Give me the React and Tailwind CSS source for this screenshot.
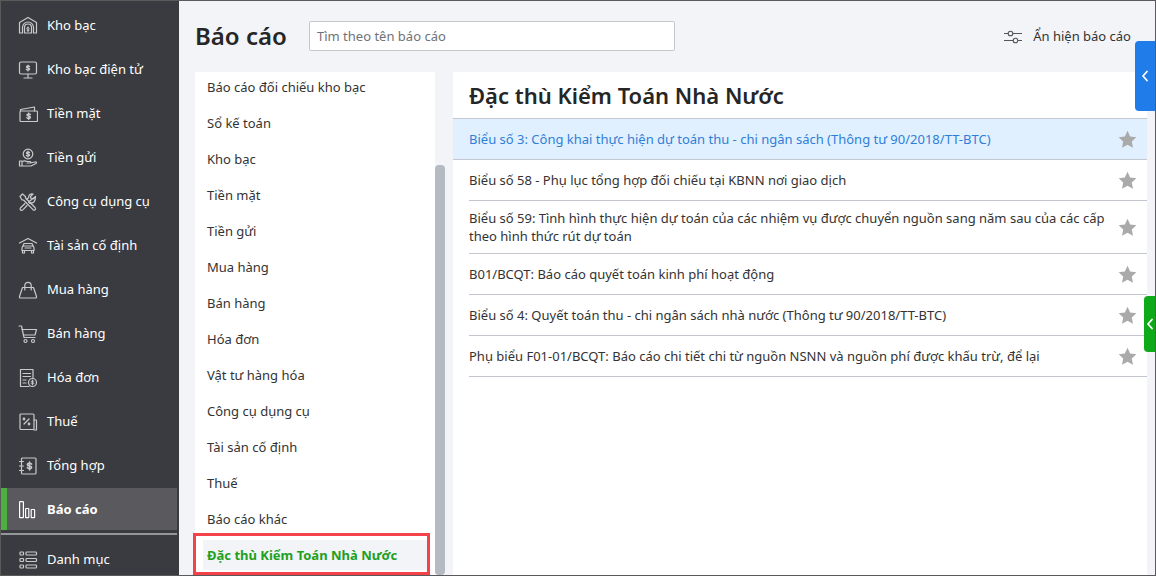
import React from "react";

// dollar sign used inside several menu icons
const Dollar = ({ x, y, s = 1 }) => (
  <g transform={`translate(${x} ${y}) scale(${s})`}>
    <path d="M1.6-1.4C1.2-2 .6-2.1 0-2.1c-.9 0-1.6.5-1.6 1.1C-1.6.6 1.6-.5 1.6 1c0 .6-.7 1.1-1.6 1.1-.7 0-1.3-.2-1.7-.8M0-3v6" />
  </g>
);

const Icon = ({ children }) => (
  <svg
    viewBox="0 0 20 20"
    className="w-5 h-5 shrink-0"
    fill="none"
    stroke="#c9cacc"
    strokeWidth="1.2"
    strokeLinecap="round"
    strokeLinejoin="round"
  >
    {children}
  </svg>
);

const menu = [
  {
    label: "Kho bạc",
    icon: (
      <>
        <path d="M1.5 17V6.5L10 1.5l8.500 5V17h-3v-5.500a5.500 5.500 0 0 0-11 0V17z" />
        <path d="M6.500 17v-5.500a3.500 3.500 0 0 1 7 0V17z" />
        <Dollar x={10} y={13.2} s={0.8} />
      </>
    ),
  },
  {
    label: "Kho bạc điện tử",
    icon: (
      <>
        <rect x="1.500" y="2" width="17" height="12" rx="1.500" />
        <path d="M10 14v3M6 18h8" />
        <Dollar x={10} y={8} />
      </>
    ),
  },
  {
    label: "Tiền mặt",
    icon: (
      <>
        <rect x="2" y="7" width="17.500" height="10.500" rx="1" />
        <path d="M2.500 7V5.500L16.500 3v4" />
        <Dollar x={10.700} y={12.200} s={1.100} />
      </>
    ),
  },
  {
    label: "Tiền gửi",
    icon: (
      <>
        <circle cx="10" cy="6" r="4.800" />
        <Dollar x={10} y={6} />
        <path d="M1.500 13h2.500v5h-2.500zM4 13.500c2-1 3.500-.8 5 0h3c1 0 1 1.500 0 1.500H9M12 15l5-1c1.500-.3 2 .9 1 1.500l-5 2.500H4" />
      </>
    ),
  },
  {
    label: "Công cụ dụng cụ",
    icon: (
      <>
        <path d="M2 4.500 4.500 2l3 2.500v1.500l9.500 9.500c1.500 2-.5 3.500-2 2.200L5.500 8H4z" />
        <path d="M17.500 4.500 15 7l-2-.5-.5-2L15 2c-2.500-.7-4.500.8-4.300 3.500L8.500 7.700M10.500 10l1.500 1.500 1-.6c2.500.4 4.500-1.500 4.500-6.400z" />
        <path d="M7 11.500 2.600 15.700c-1.500 1.800.8 3.500 2.300 2.200L9 13.500" />
      </>
    ),
  },
  {
    label: "Tài sản cố định",
    icon: (
      <>
        <path d="M1.500 7 10 2.500 18.500 7" />
        <path d="M4 14.500v-2.500c0-1 .5-1.500 1-2l1-2.500h8l1 2.500c.5.500 1 1 1 2v2.500z" />
        <path d="M5 10h10M4.500 14.500V17h2v-2.500M13.500 14.500V17h2v-2.500M7 12h6" />
      </>
    ),
  },
  {
    label: "Mua hàng",
    icon: (
      <>
        <path d="M4.500 7.500h11l3 9c.3 1-.3 1.500-1 1.500h-15c-.7 0-1.300-.5-1-1.500z" />
        <path d="M6.800 10V5.500a3.200 3.200 0 0 1 6.400 0V10" />
      </>
    ),
  },
  {
    label: "Bán hàng",
    icon: (
      <>
        <path d="M1 2h2.500l2.500 11.500h11" />
        <path d="M4 5.500h14.500l-1.500 5.500H5.500" />
        <circle cx="7.500" cy="17" r="1.500" />
        <circle cx="15" cy="17" r="1.500" />
      </>
    ),
  },
  {
    label: "Hóa đơn",
    icon: (
      <>
        <path d="M11 18.500H2.500V1.500H15v8" />
        <path d="M5 5.500h7.500M5 8.500h7.500M5 12h3M5 15h3" />
        <circle cx="14.500" cy="14.500" r="4" />
        <Dollar x={14.500} y={14.500} s={0.8} />
      </>
    ),
  },
  {
    label: "Thuế",
    icon: (
      <>
        <rect x="2" y="2" width="14" height="15.500" rx="1" />
        <path d="M16 8h2.500v10H16" />
        <path d="m6 12 5-5" />
        <circle cx="6" cy="7" r=".8" />
        <circle cx="11" cy="12" r=".8" />
      </>
    ),
  },
  {
    label: "Tổng hợp",
    icon: (
      <>
        <rect x="3.500" y="2" width="14.500" height="16" rx="1" />
        <path d="M1.500 5.500h4M1.500 10h4M1.500 14.500h4" />
        <Dollar x={11.500} y={10} s={1.300} />
      </>
    ),
  },
  {
    label: "Báo cáo",
    active: true,
    icon: (
      <g stroke="#ffffff">
        <rect x="1.600" y="1.700" width="3.800" height="16" rx=".5" />
        <rect x="7.600" y="8.500" width="3.200" height="9.200" rx=".5" />
        <rect x="13.200" y="9.500" width="3.400" height="8.200" rx=".5" />
      </g>
    ),
  },
];

const groups = [
  "Báo cáo đối chiếu kho bạc",
  "Sổ kế toán",
  "Kho bạc",
  "Tiền mặt",
  "Tiền gửi",
  "Mua hàng",
  "Bán hàng",
  "Hóa đơn",
  "Vật tư hàng hóa",
  "Công cụ dụng cụ",
  "Tài sản cố định",
  "Thuế",
  "Báo cáo khác",
];

const reports = [
  {
    title: "Biểu số 3: Công khai thực hiện dự toán thu - chi ngân sách (Thông tư 90/2018/TT-BTC)",
    active: true,
  },
  { title: "Biểu số 58 - Phụ lục tổng hợp đối chiếu tại KBNN nơi giao dịch" },
  {
    title:
      "Biểu số 59: Tình hình thực hiện dự toán của các nhiệm vụ được chuyển nguồn sang năm sau của các cấp theo hình thức rút dự toán",
  },
  { title: "B01/BCQT: Báo cáo quyết toán kinh phí hoạt động" },
  { title: "Biểu số 4: Quyết toán thu - chi ngân sách nhà nước (Thông tư 90/2018/TT-BTC)" },
  { title: "Phụ biểu F01-01/BCQT: Báo cáo chi tiết chi từ nguồn NSNN và nguồn phí được khấu trừ, để lại" },
];

const Star = () => (
  <svg viewBox="0 0 20 20" className="w-[19px] h-[19px] shrink-0" fill="#aaaaaa">
    <path d="M10 .8l2.800 6 6.500.8-4.800 4.500 1.300 6.500L10 15.400l-5.800 3.200 1.300-6.500L.7 7.600l6.500-.8z" />
  </svg>
);

const Chevron = () => (
  <svg viewBox="0 0 8 12" className="w-2 h-3" fill="none" stroke="#ffffff" strokeWidth="1.800" strokeLinecap="round" strokeLinejoin="round">
    <path d="M6 1.500 2 6l4 4.500" />
  </svg>
);

const App = () => {
  return (
    <div className="relative flex w-[1156px] h-[576px] overflow-hidden bg-[#f2f4f8] border border-[#5a5a5a] font-['Noto_Sans',sans-serif] text-[13px] text-[#333333]">
      {/* sidebar */}
      <aside className="w-[178px] shrink-0 bg-[#3a3b40] pt-[2px] text-white">
        {menu.map((item) => (
          <div key={item.label} className="h-11 py-px">
            <div
              className={`flex items-center h-[42px] mr-[2px] pt-[2px] gap-[9px] ${
                item.active ? "bg-[#59595e] font-bold border-l-[6px] border-[#4caf3f] pl-[11px]" : "pl-[17px]"
              }`}
            >
              <Icon>{item.icon}</Icon>
              <span>{item.label}</span>
            </div>
          </div>
        ))}
        <div className="h-[2px] mr-[2px] mt-[2px] bg-[#96979b]" />
        <div className="flex items-center h-[50px] pl-[17px] gap-[9px]">
          <Icon>
            <rect x="2" y="2" width="3.500" height="3" rx=".8" />
            <rect x="2" y="8.500" width="3.500" height="3" rx=".8" />
            <rect x="2" y="15" width="3.500" height="3" rx=".8" />
            <rect x="8" y="2" width="10.500" height="3" rx=".8" />
            <rect x="8" y="8.500" width="10.500" height="3" rx=".8" />
            <rect x="8" y="15" width="10.500" height="3" rx=".8" />
          </Icon>
          <span>Danh mục</span>
        </div>
      </aside>

      {/* main */}
      <main className="flex-1 min-w-0 flex flex-col">
        <header className="flex items-center h-[70px] mb-px shrink-0 pl-4 pr-[24px]">
          <h1 className="w-[114px] text-2xl font-semibold text-[#262626]">Báo cáo</h1>
          <div className="flex items-center w-[366px] h-[30px] px-[7px] pt-[2px] bg-white border border-[#c4c7cc] rounded-[2px] text-[#6f7277]">
            Tìm theo tên báo cáo
          </div>
          <div className="flex items-center gap-[11px] ml-auto pt-[2px]">
            <svg viewBox="0 0 18 14" className="w-[18px] h-[14px]" fill="none" stroke="#555555" strokeWidth="1.100">
              <path d="M0 3.500h4M9 3.500h9M0 10.500h9M14 10.500h4" />
              <circle cx="6.500" cy="3.500" r="2.300" />
              <circle cx="11.500" cy="10.500" r="2.300" />
            </svg>
            <span>Ẩn hiện báo cáo</span>
          </div>
        </header>

        <div className="flex flex-1 min-h-0 pl-4 pr-2">
          {/* report groups */}
          <div className="relative flex w-[250px] shrink-0 mr-2">
            <ul className="w-[240px] bg-white overflow-hidden">
              {groups.map((g, i) => (
                <li key={g} className={`flex items-center pl-3 ${i === 0 ? "h-[34px] pb-[3px]" : "h-9"}`}>
                  {g}
                </li>
              ))}
              <li className="flex items-center h-[30px] mt-[2px] mx-2 pl-1 pt-[2px] bg-[#f2f4f8] font-bold text-[#1ea01e]">
                Đặc thù Kiểm Toán Nhà Nước
              </li>
            </ul>
            <div className="w-[10px] mt-[93px] bg-[#b6bac2] rounded-[4px]" />
          </div>

          {/* report list */}
          <section className="flex-1 min-w-0 bg-white">
            <h2 className="flex items-center h-[46px] pl-4 text-[22px] font-semibold text-[#262626]">
              Đặc thù Kiểm Toán Nhà Nước
            </h2>
            <div className="border-t border-[#c4c7d0]">
              {reports.map((r) => (
                <div key={r.title} className={r.active ? "bg-[#e1f0fe]" : "pl-4"}>
                  <div
                    className={`flex items-center justify-between py-2 pr-[10px] border-b border-[#c4c7d0] leading-[18px] min-h-[41px] ${
                      r.active ? "pl-4 text-[#2f7fd8]" : ""
                    }`}
                  >
                    <span className="w-[640px]">{r.title}</span>
                    <Star />
                  </div>
                </div>
              ))}
            </div>
          </section>
        </div>
      </main>

      {/* side handles */}
      <div className="absolute right-0 top-[40px] flex items-center justify-center w-5 h-[70px] bg-[#1f7ce8] rounded-l-[4px]">
        <Chevron />
      </div>
      <div className="absolute right-0 top-[295px] flex items-center justify-center w-[11px] h-[56px] bg-[#0eaa1a] rounded-l-[4px]">
        <Chevron />
      </div>

      {/* red highlight annotation */}
      <div className="absolute left-[192px] top-[532px] w-[237px] h-[42px] border-[3px] border-[#f4424b]" />
    </div>
  );
};

export default App;
